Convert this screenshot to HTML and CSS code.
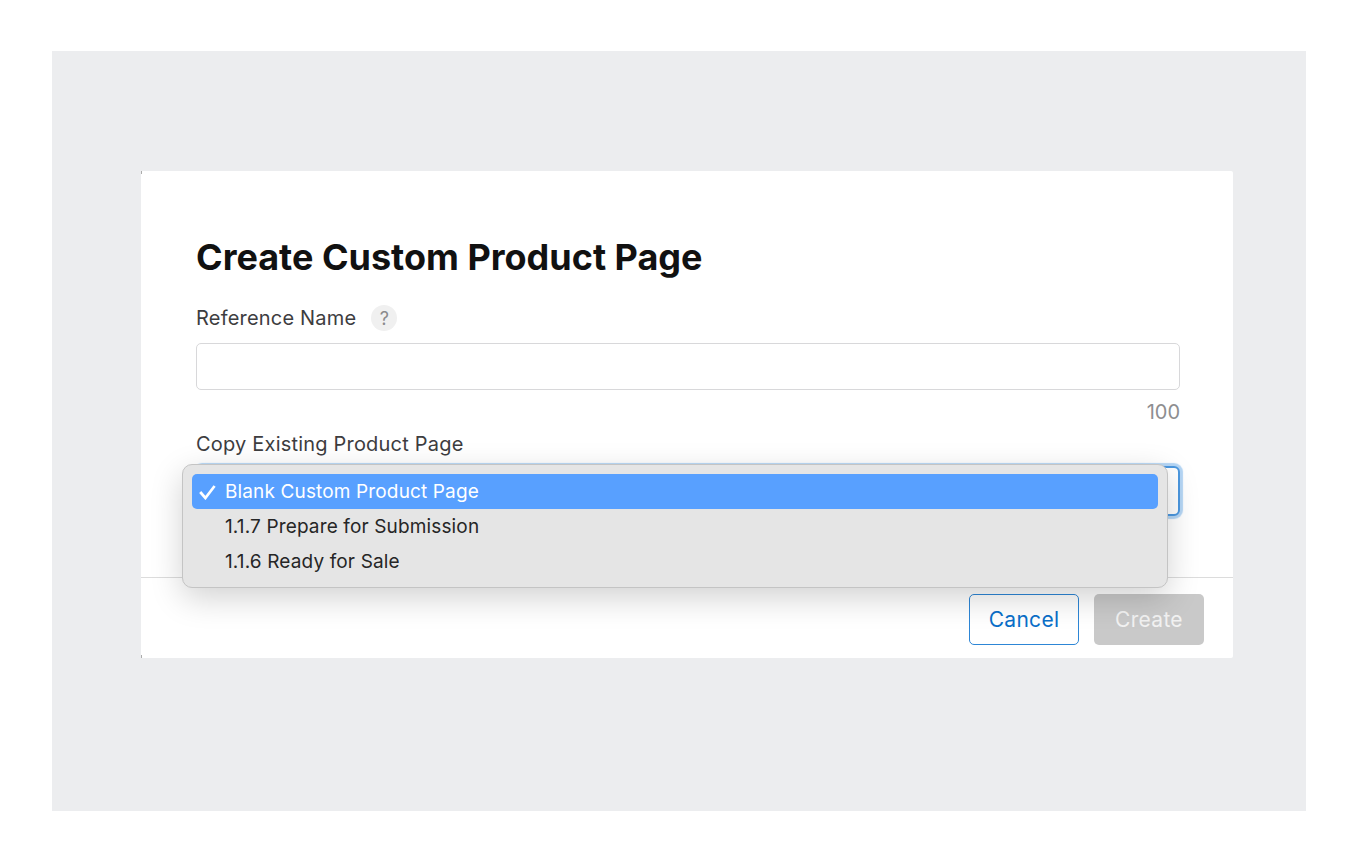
FILE: index.html
```html
<!DOCTYPE html>
<html lang="en">
<head>
<meta charset="utf-8">
<title>Create Custom Product Page</title>
<link rel="stylesheet" href="styles.css">
</head>
<body>
<main class="stage">
  <section class="modal">
    <div class="modal-body">
      <h1 class="title">Create Custom Product Page</h1>
      <div class="label-row">
        <label class="label">Reference Name</label>
        <span class="help">?</span>
      </div>
      <div class="input"></div>
      <div class="counter">100</div>
      <label class="label label-copy">Copy Existing Product Page</label>
      <div class="select-wrap">
        <div class="select"></div>
        <ul class="menu">
          <li class="item item-active">
            <svg class="check" width="18" height="15" viewBox="0 0 18 15"><path d="M1.2 7 6.4 13 15.6 1" fill="none" stroke="#fff" stroke-width="2.7"/></svg>
            Blank Custom Product Page
          </li>
          <li class="item">1.1.7 Prepare for Submission</li>
          <li class="item">1.1.6 Ready for Sale</li>
        </ul>
      </div>
    </div>
    <footer class="footer">
      <button class="btn btn-cancel">Cancel</button>
      <button class="btn btn-create">Create</button>
    </footer>
  </section>
</main>
</body>
</html>
```

FILE: styles.css
```css
* { box-sizing: border-box; }
html, body { margin: 0; padding: 0; }
body {
  width: 1360px;
  height: 860px;
  background: #fff;
  padding: 51px 54px 49px 52px;
  font-family: Inter, "Liberation Sans", sans-serif;
  overflow: hidden;
}
.stage {
  height: 760px;
  background: #ecedef;
  padding: 120px 73px 153px 89px;
}
.modal {
  position: relative;
  height: 487px;
  background: #fff;
  border-radius: 2px;
  display: flex;
  flex-direction: column;
}
.modal::before,
.modal::after {
  content: "";
  position: absolute;
  left: 0;
  width: 1px;
  height: 3px;
  background: #ababab;
}
.modal::before { top: 0; }
.modal::after { bottom: 0; }
.modal-body {
  flex: 1;
  padding: 66px 53px 0 55px;
}
.title {
  margin: 0;
  font-size: 36px;
  line-height: 40px;
  font-weight: 700;
  color: #111;
}
.label-row {
  display: flex;
  align-items: center;
  gap: 15px;
  margin-top: 28px;
  height: 26px;
}
.label {
  display: block;
  font-size: 20px;
  line-height: 26px;
  font-weight: 400;
  letter-spacing: 0.2px;
  color: #3d3d3f;
}
.help {
  width: 26px;
  height: 26px;
  border-radius: 50%;
  background: #f0f0f0;
  color: #8a8a8c;
  font-size: 18px;
  font-weight: 400;
  display: flex;
  align-items: center;
  justify-content: center;
}
.input {
  margin-top: 12px;
  height: 47px;
  border: 1px solid #d8d8da;
  border-radius: 5px;
  background: #fff;
}
.counter {
  margin-top: 9px;
  text-align: right;
  font-size: 20px;
  line-height: 26px;
  color: #8e8e90;
}
.label-copy { margin-top: 6px; }
.select-wrap {
  position: relative;
  margin-top: 9px;
}
.select {
  height: 50px;
  border: 2px solid #4c98e0;
  border-radius: 6px;
  box-shadow: 0 0 1px 3px #b5d6f5;
  background: #fff;
}
.menu {
  position: absolute;
  left: -14px;
  top: -2px;
  width: 986px;
  height: 124px;
  margin: 0;
  padding: 9px 9px;
  list-style: none;
  background: #e5e5e5;
  border: 1px solid #c4c4c4;
  border-radius: 10px;
  box-shadow: 0 10px 32px rgba(0, 0, 0, 0.18);
}
.item {
  position: relative;
  height: 35px;
  padding-left: 33px;
  border-radius: 5px;
  font-size: 19px;
  line-height: 35px;
  letter-spacing: 0.14px;
  color: #262626;
}
.item-active {
  background: #58a0ff;
  color: #fff;
}
.check {
  position: absolute;
  left: 7px;
  top: 11px;
}
.footer {
  height: 81px;
  border-top: 1px solid #dcdcdc;
  display: flex;
  justify-content: flex-end;
  align-items: flex-start;
  gap: 15px;
  padding: 16px 29px 0 0;
}
.btn {
  height: 51px;
  border-radius: 5px;
  font-family: inherit;
  font-size: 21px;
  font-weight: 400;
  letter-spacing: 0.3px;
}
.btn-cancel {
  width: 110px;
  background: #fff;
  border: 1px solid #2d86d6;
  color: #0a6fc9;
}
.btn-create {
  width: 110px;
  background: #c9c9c9;
  border: 0;
  color: #f2f2f2;
}
```
